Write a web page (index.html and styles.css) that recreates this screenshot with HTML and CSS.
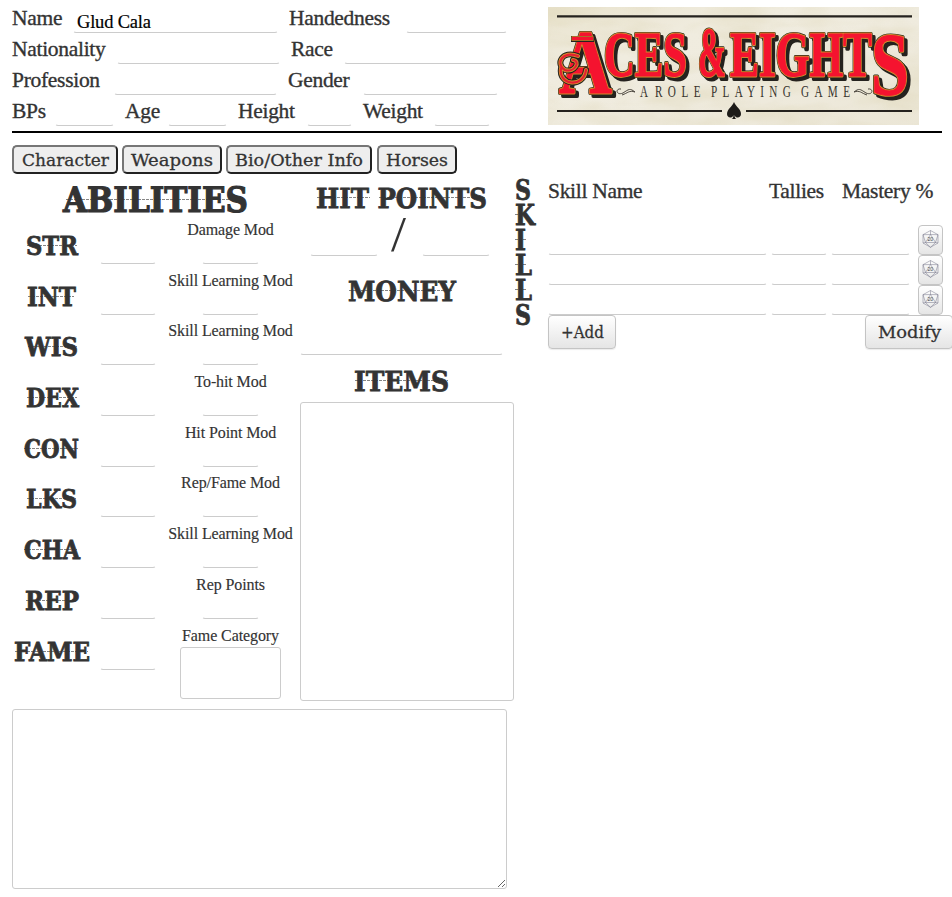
FILE: index.html
```
<!DOCTYPE html>
<html lang="en">
<head>
<meta charset="utf-8">
<title>Aces &amp; Eights Character Sheet</title>
<link rel="stylesheet" href="styles.css">
</head>
<body>
<div class="sheet">
<header class="top">
  <div class="info">
    <div class="row row-name"><label>Name</label><input value="Glud Cala"><label>Handedness</label><input></div>
    <div class="row row-nation"><label>Nationality</label><input><label>Race</label><input></div>
    <div class="row row-prof"><label>Profession</label><input><label>Gender</label><input></div>
    <div class="row row-body"><label>BPs</label><input><label>Age</label><input><label>Height</label><input><label>Weight</label><input></div>
  </div>
  <svg class="logo" width="371" height="118" viewBox="0 0 371 118">
    <defs>
      <linearGradient id="paper" x1="0" y1="0" x2="1" y2="1"><stop offset="0" stop-color="#e9e3ce"/><stop offset=".3" stop-color="#f0ecdf"/><stop offset=".6" stop-color="#efebde"/><stop offset="1" stop-color="#ebe6d6"/></linearGradient>
      <filter id="grain" x="0" y="0" width="1" height="1"><feTurbulence type="fractalNoise" baseFrequency=".018 .05" numOctaves="3" seed="4"/><feColorMatrix values="0 0 0 0 .72  0 0 0 0 .66  0 0 0 0 .45  1.4 0 0 0 -.5"/></filter>
      <g id="wordmark" font-family="Liberation Serif" font-weight="700" stroke-linejoin="round">
        <text x="11" y="86" font-size="90" textLength="53" lengthAdjust="spacingAndGlyphs">A</text>
        <text x="56" y="69" font-size="63" textLength="83" lengthAdjust="spacingAndGlyphs">CES</text>
        <text x="150" y="69" font-size="70" textLength="28" lengthAdjust="spacingAndGlyphs">&amp;</text>
        <text x="182" y="69" font-size="63" textLength="142" lengthAdjust="spacingAndGlyphs">EIGHT</text>
        <text x="323" y="87" font-size="89" textLength="38" lengthAdjust="spacingAndGlyphs">S</text>
      </g>
    </defs>
    <rect width="371" height="118" fill="url(#paper)"/>
    <rect width="371" height="118" filter="url(#grain)" opacity=".6"/>
    <path d="M9 9.3H364M9 104H174M198 104H364" stroke="#25221e" stroke-width="2.2"/>
    <use href="#wordmark" x="3" y="2.500" fill="#25221e" stroke="#25221e" stroke-width="4"/>
    <use href="#wordmark" fill="#25221e" stroke="#25221e" stroke-width="4.2"/>
    <use href="#wordmark" fill="#d58a2c" stroke="#d58a2c" stroke-width="2.8"/>
    <use href="#wordmark" fill="#f5132f" stroke="#f5132f" stroke-width=".8"/>
    <path d="M23 32H46" stroke="#25221e" stroke-width="6"/>
    <path d="M23.500 31.500H45.500" stroke="#d58a2c" stroke-width="4.5"/>
    <path d="M24 31.500H45" stroke="#f5132f" stroke-width="3"/>
    <g fill="none" stroke-linecap="round">
      <path d="M30 49C14 43 7 57 17 63C27 66 33 54 25 53M13 61C10 79 36 81 38 63" stroke="#25221e" stroke-width="6"/>
      <path d="M30 49C14 43 7 57 17 63C27 66 33 54 25 53M13 61C10 79 36 81 38 63" stroke="#d58a2c" stroke-width="4"/>
      <path d="M30 49C14 43 7 57 17 63C27 66 33 54 25 53M13 61C10 79 36 81 38 63" stroke="#e51f30" stroke-width="2.2"/>
    </g>
    <g font-family="Liberation Serif" font-size="16" fill="#38342e">
      <text x="92" y="89.500" textLength="8" lengthAdjust="spacingAndGlyphs">A</text>
      <text transform="translate(107 89.500) scale(.7 1)" textLength="65" lengthAdjust="spacing">ROLE</text>
      <text transform="translate(163 89.500) scale(.7 1)" textLength="114" lengthAdjust="spacing">PLAYING</text>
      <text transform="translate(253 89.500) scale(.7 1)" textLength="70" lengthAdjust="spacing">GAME</text>
    </g>
    <path d="M73 82C67 81 68 89 75 86C81 82 82 81 87 85C81 83 80 86 74 88" fill="none" stroke="#4b463e"/>
    <path d="M320 82C326 81 325 89 318 86C312 82 311 81 306 85C312 83 313 86 319 88" fill="none" stroke="#4b463e"/>
    <path d="M186 95C184 100 179 102 179 107C179 111 184 112 185.500 108C185.500 110 184.500 112 183.500 112H188.500C187.500 112 186.500 110 186.500 108C188 112 193 111 193 107C193 102 188 100 186 95Z" fill="#1d1b18"/>
  </svg>
</header>

<nav class="tabs">
  <button class="tab t1"><svg width="88" height="25"><text x="0" y="19" textLength="87" lengthAdjust="spacingAndGlyphs">Character</text></svg></button>
  <button class="tab t2"><svg width="83" height="25"><text x="0" y="19" textLength="82" lengthAdjust="spacingAndGlyphs">Weapons</text></svg></button>
  <button class="tab t3"><svg width="129" height="25"><text x="0" y="19" textLength="128" lengthAdjust="spacingAndGlyphs">Bio/Other Info</text></svg></button>
  <button class="tab t4"><svg width="63" height="25"><text x="0" y="19" textLength="62" lengthAdjust="spacingAndGlyphs">Horses</text></svg></button>
</nav>

<main class="main">
  <section class="abilities">
    <svg class="head" width="288" height="46"><text class="big" x="51" y="38" textLength="185" lengthAdjust="spacingAndGlyphs">ABILITIES</text><path class="spur" d="M54 25.500H234"/></svg>
    <div class="stat"><svg width="88" height="50"><text x="14" y="35" textLength="52" lengthAdjust="spacingAndGlyphs">STR</text><path class="spur" d="M15 25.500H65"/></svg><input><div class="mod"><span>Damage Mod</span><input></div></div>
    <div class="stat"><svg width="88" height="50"><text x="15" y="35" textLength="49" lengthAdjust="spacingAndGlyphs">INT</text><path class="spur" d="M16 25.500H62"/></svg><input><div class="mod"><span>Skill Learning Mod</span><input></div></div>
    <div class="stat"><svg width="88" height="50"><text x="13" y="35" textLength="53" lengthAdjust="spacingAndGlyphs">WIS</text><path class="spur" d="M16 25.500H65"/></svg><input><div class="mod"><span>Skill Learning Mod</span><input></div></div>
    <div class="stat"><svg width="88" height="50"><text x="14" y="35" textLength="53" lengthAdjust="spacingAndGlyphs">DEX</text><path class="spur" d="M15 25.500H65"/></svg><input><div class="mod"><span>To-hit Mod</span><input></div></div>
    <div class="stat"><svg width="88" height="50"><text x="12" y="35" textLength="55" lengthAdjust="spacingAndGlyphs">CON</text><path class="spur" d="M12 25.500H66"/></svg><input><div class="mod"><span>Hit Point Mod</span><input></div></div>
    <div class="stat"><svg width="88" height="50"><text x="14" y="35" textLength="51" lengthAdjust="spacingAndGlyphs">LKS</text><path class="spur" d="M15 25.500H64"/></svg><input><div class="mod"><span>Rep/Fame Mod</span><input></div></div>
    <div class="stat"><svg width="88" height="50"><text x="12" y="35" textLength="56" lengthAdjust="spacingAndGlyphs">CHA</text><path class="spur" d="M12 25.500H65"/></svg><input><div class="mod"><span>Skill Learning Mod</span><input></div></div>
    <div class="stat"><svg width="88" height="50"><text x="13" y="35" textLength="54" lengthAdjust="spacingAndGlyphs">REP</text><path class="spur" d="M14 25.500H66"/></svg><input><div class="mod"><span>Rep Points</span><input></div></div>
    <div class="stat"><svg width="88" height="50"><text x="2" y="35" textLength="76" lengthAdjust="spacingAndGlyphs">FAME</text><path class="spur" d="M3 25.500H76"/></svg><input><div class="mod"><span>Fame Category</span><textarea class="fame"></textarea></div></div>
  </section>

  <section class="middle">
    <svg class="head" width="214" height="43"><text x="16" y="34" textLength="171" lengthAdjust="spacingAndGlyphs">HIT POINTS</text><path class="spur" d="M17 23.500H70M79 23.500H185"/></svg>
    <div class="hp"><input><svg width="44" height="39"><text class="slash" x="13" y="34" textLength="15" lengthAdjust="spacingAndGlyphs">/</text></svg><input></div>
    <svg class="head" width="214" height="68"><text x="48" y="45" textLength="108" lengthAdjust="spacingAndGlyphs">MONEY</text><path class="spur" d="M49 34.500H153"/></svg>
    <input class="money">
    <svg class="head" width="214" height="47"><text x="54" y="36" textLength="95" lengthAdjust="spacingAndGlyphs">ITEMS</text><path class="spur" d="M55 25.500H148"/></svg>
    <textarea class="items"></textarea>
  </section>

  <svg class="skills-title" width="34" height="160">
    <text x="1" y="26" textLength="16" lengthAdjust="spacingAndGlyphs">S</text>
    <text x="1" y="51" textLength="20" lengthAdjust="spacingAndGlyphs">K</text>
    <text x="1" y="76" textLength="11" lengthAdjust="spacingAndGlyphs">I</text>
    <text x="1" y="101" textLength="17" lengthAdjust="spacingAndGlyphs">L</text>
    <text x="1" y="126" textLength="17" lengthAdjust="spacingAndGlyphs">L</text>
    <text x="1" y="151" textLength="16" lengthAdjust="spacingAndGlyphs">S</text>
    <path class="spur" d="M1 40.500H12M1 65.500H12M1 90.500H12M1 115.500H12"/>
  </svg>

  <section class="skills">
    <div class="skill-head"><label>Skill Name</label><label>Tallies</label><label>Mastery&nbsp;%</label></div>
    <div class="skill"><input><input><input><button class="die"><svg width="17" height="18" viewBox="0 0 17 18"><path d="M8.500 .5L16 4.700V13L8.500 17.300L1 13V4.700ZM8.500 .5V4.500L3.500 12.500H13.500L8.500 4.500M1 4.700L8.500 4.500L16 4.700L13.500 12.500L16 13M1 4.700L3.500 12.500L1 13M3.500 12.500L8.500 17.300L13.500 12.500"/><text x="5.500" y="11.300">20</text></svg></button></div>
    <div class="skill"><input><input><input><button class="die"><svg width="17" height="18" viewBox="0 0 17 18"><path d="M8.500 .5L16 4.700V13L8.500 17.300L1 13V4.700ZM8.500 .5V4.500L3.500 12.500H13.500L8.500 4.500M1 4.700L8.500 4.500L16 4.700L13.500 12.500L16 13M1 4.700L3.500 12.500L1 13M3.500 12.500L8.500 17.300L13.500 12.500"/><text x="5.500" y="11.300">20</text></svg></button></div>
    <div class="skill"><input><input><input><button class="die"><svg width="17" height="18" viewBox="0 0 17 18"><path d="M8.500 .5L16 4.700V13L8.500 17.300L1 13V4.700ZM8.500 .5V4.500L3.500 12.500H13.500L8.500 4.500M1 4.700L8.500 4.500L16 4.700L13.500 12.500L16 13M1 4.700L3.500 12.500L1 13M3.500 12.500L8.500 17.300L13.500 12.500"/><text x="5.500" y="11.300">20</text></svg></button></div>
    <div class="actions">
      <button class="act add"><svg width="44" height="32"><text x="0" y="22" textLength="43" lengthAdjust="spacingAndGlyphs">+Add</text></svg></button>
      <button class="act modify"><svg width="64" height="32"><text x="0" y="22" textLength="63" lengthAdjust="spacingAndGlyphs">Modify</text></svg></button>
    </div>
  </section>
</main>
<textarea class="notes"></textarea>
</div>
</body>
</html>
```
FILE: styles.css
```
* { box-sizing: border-box; }
html, body { overflow: hidden; }
body {
  margin: 0;
  background: #fff;
  color: #333;
  font-family: "Liberation Serif", serif;
}
.sheet { width: 952px; height: 897px; padding: 2px 0 0 12px; overflow: hidden; }
svg { display: block; flex: none; overflow: visible; }
input, textarea, button { display: block; margin: 0; font-family: inherit; color: inherit; outline: none; }
input {
  min-width: 0;
  width: 100%;
  height: 28px;
  padding: 4px;
  border: 1px solid transparent;
  border-bottom-color: #ccc;
  border-radius: 3px;
  background: transparent;
}
textarea { border: 1px solid #ccc; border-radius: 3px; background: #fff; resize: none; }
label {
  font-size: 21.5px;
  line-height: 33px;
  white-space: nowrap;
  letter-spacing: -.3px;
  -webkit-text-stroke: .35px #333;
}

/* header */
.top { display: flex; width: 930px; height: 131px; border-bottom: 2px solid #000; }
.info { width: 536px; }
.row { display: grid; height: 31px; column-gap: 11px; }
.row input { height: 31px; padding: 11px 3px 2px; font-size: 18.5px; line-height: 18px; letter-spacing: -.2px; color: #000; -webkit-text-stroke: .2px #000; }
.row-name { grid-template-columns: 50px 205px 106px 101px; }
.row-nation { grid-template-columns: 94px 163px 42px 163px; }
.row-prof { grid-template-columns: 91px 163px 64px 135px; }
.row-body { grid-template-columns: 32px 59px 32px 59px 58px 45px 60px 56px; }
.logo { margin-top: 5px; overflow: hidden; }

/* tabs */
.tabs { display: flex; height: 41px; padding-top: 12px; gap: 4px; }
.tab {
  height: 29px;
  padding: 0 0 0 8px;
  border: 2px solid;
  border-color: #767676 #222 #222 #767676;
  border-radius: 5px;
  background: #eee;
}
.tab text, .act text { font-family: "DejaVu Serif", serif; font-size: 17.5px; fill: #333; stroke: #333; stroke-width: .3px; }
.t1 { width: 106px; }
.t2 { width: 100px; padding-left: 7px; }
.t3 { width: 146px; padding-left: 7px; }
.t4 { width: 80px; padding-left: 7px; margin-left: 1px; }

/* body */
.main { display: grid; grid-template-columns: 288px 214px 34px 410px; height: 535px; }
.abilities text, .head text, .skills-title text {
  font-family: "DejaVu Serif", serif;
  font-weight: 700;
  font-size: 26px;
  fill: #333;
  stroke: #333;
  stroke-width: .8px;
}
.head text, .skills-title text { font-size: 27.5px; }
.head text.big { font-size: 35px; stroke-width: 1.2px; }
.spur { fill: none; stroke: #333; stroke-width: 1; stroke-dasharray: 3 1; opacity: .6; }
.stat { display: grid; grid-template-columns: 88px 56px 1fr; height: 50.7px; }
.stat > input { height: 44px; }
.mod { display: flex; flex-direction: column; align-items: center; padding-left: 5px; }
.mod span {
  height: 20px;
  font-size: 16px;
  line-height: 20px;
  letter-spacing: -.1px;
  white-space: nowrap;
  -webkit-text-stroke: .15px #333;
}
.mod input { width: 57px; height: 24px; }
.fame { width: 101px; height: 52px; margin-top: 1px; flex: none; }
.hp { display: flex; height: 39px; padding: 0 25px 0 10px; }
.hp input { width: 68px; flex: none; height: 39px; }
.head text, .hp .slash { text-rendering: geometricPrecision; }
.hp .slash { font-family: "Liberation Serif", serif; font-size: 50px; fill: #333; }
.money { width: 203px; height: 31px; }
.items { width: 214px; height: 299px; }

/* skills */
.skill-head { display: grid; grid-template-columns: 221px 73px 100px; height: 50px; padding-top: 1px; }
.skill { display: grid; grid-template-columns: 219px 56px 79px 25px; column-gap: 4px; height: 30px; }
.skill input { height: 31px; }
.die {
  display: flex;
  align-items: center;
  justify-content: center;
  width: 25px;
  height: 30px;
  margin: 1px 0 0 4px;
  padding: 0 0 2px;
  border: 1px solid #c4c4c4;
  border-radius: 4px;
  background: linear-gradient(#fff, #e5e5e5);
}
.die path { fill: none; stroke: #77778a; stroke-width: .5; }
.die text { font: 5px "Liberation Sans", sans-serif; fill: #444; }
.actions { display: flex; justify-content: space-between; width: 405px; padding-top: 1px; }
.act {
  height: 34px;
  padding: 0 0 0 12px;
  border: 1px solid #c4c4c4;
  border-radius: 4px;
  background: linear-gradient(#fff, #e5e5e5);
  box-shadow: 0 1px 1px rgba(0, 0, 0, .08);
}
.add { width: 68px; }
.modify { width: 88px; }

.notes { width: 495px; height: 180px; resize: both; }
```
